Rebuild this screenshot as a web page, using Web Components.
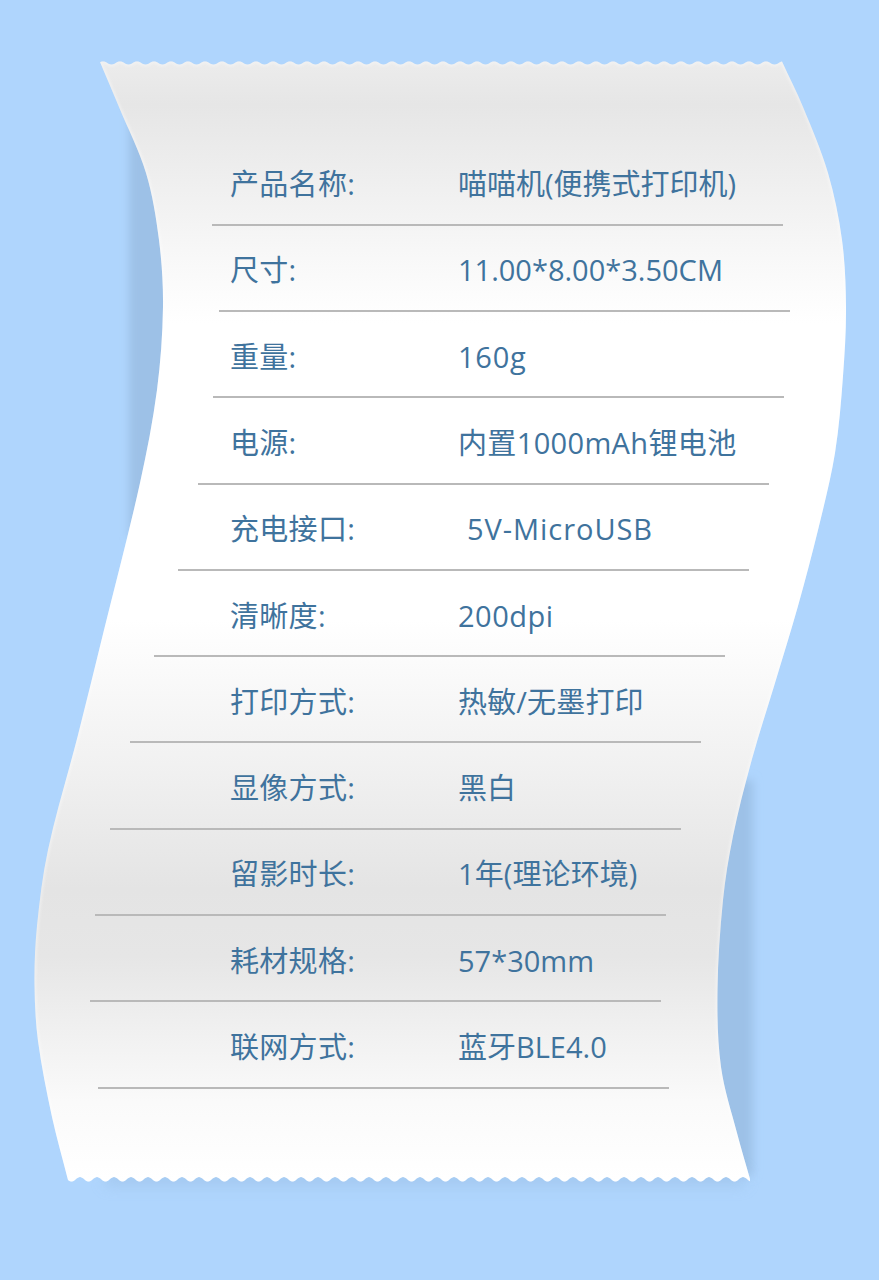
<!DOCTYPE html>
<html><head><meta charset="utf-8"><style>html,body{margin:0;padding:0;background:#afd5fd}</style></head><body>
<spec-receipt>
<spec-row x="212" label="产品名称:" value="喵喵机(便携式打印机)"></spec-row>
<spec-row x="219" label="尺寸:" value="11.00*8.00*3.50CM"></spec-row>
<spec-row x="213" label="重量:" value="160g" ls=".75"></spec-row>
<spec-row x="198" label="电源:" value="内置1000mAh锂电池" ls=".35"></spec-row>
<spec-row x="178" label="充电接口:" value="5V-MicroUSB" nudge="9" ls=".95"></spec-row>
<spec-row x="154" label="清晰度:" value="200dpi" ls=".5"></spec-row>
<spec-row x="130" label="打印方式:" value="热敏/无墨打印" ls=".15"></spec-row>
<spec-row x="110" label="显像方式:" value="黑白"></spec-row>
<spec-row x="95" label="留影时长:" value="1年(理论环境)" ls=".1"></spec-row>
<spec-row x="90" label="耗材规格:" value="57*30mm"></spec-row>
<spec-row x="98" label="联网方式:" value="蓝牙BLE4.0"></spec-row>
</spec-receipt>
<script>
class SpecRow extends HTMLElement{
  constructor(){super();const s=this.attachShadow({mode:'open'});
  s.innerHTML=`<style>
  :host{display:block;height:86.3px;box-sizing:border-box}
  .t{display:flex;height:84.3px;align-items:center;padding-top:4px;box-sizing:border-box;padding-left:230px;font:400 29px/1 "Open Sans","Noto Sans CJK SC",sans-serif;color:#3f739d}
  .l{width:228px;flex:none;letter-spacing:.3px}
  .r{height:2px;width:571px;background:#b9b9b9}
  </style><div class="t"><span class="l"></span><span class="v"></span></div><div class="r"></div>`;}
  connectedCallback(){const s=this.shadowRoot;
    s.querySelector('.l').textContent=this.getAttribute('label');
    const v=s.querySelector('.v');v.textContent=this.getAttribute('value');
    v.style.marginLeft=(this.getAttribute('nudge')||0)+'px';
    v.style.letterSpacing=(this.getAttribute('ls')||0)+'px';
    s.querySelector('.r').style.marginLeft=this.getAttribute('x')+'px';}
}
customElements.define('spec-row',SpecRow);

// smooth curve through unevenly spaced points: tangent from neighbours, handle length from the chord
function spline(p){let d='';const f=n=>n.toFixed(1);
  const tan=i=>{const a=p[i-1]||p[i],c=p[i+1]||p[i],x=c[0]-a[0],y=c[1]-a[1],l=Math.hypot(x,y);return[x/l,y/l];};
  for(let i=0;i<p.length-1;i++){
    const b=p[i],c=p[i+1],l=Math.hypot(c[0]-b[0],c[1]-b[1])/3,t0=tan(i),t1=tan(i+1);
    d+=` C${f(b[0]+t0[0]*l)} ${f(b[1]+t0[1]*l)} ${f(c[0]-t1[0]*l)} ${f(c[1]-t1[1]*l)} ${f(c[0])} ${f(c[1])}`;}
  return d;}
function wave(x0,x1,fn){let d='';const st=x1>x0?1:-1;
  for(let x=x0;st>0?x<=x1:x>=x1;x+=st)d+=` L${x} ${fn(x).toFixed(2)}`;return d;}

class SpecReceipt extends HTMLElement{
  constructor(){super();const s=this.attachShadow({mode:'open'});
  const leftPts=[[68,1180],[52,1117],[38,1041],[34.5,984],[37,926],[48,850],[78,735],[104,630],[140,483],[157,390],[163,307],[159,240],[146,173],[119,107],[100,62]];
  const rightPts=[[782,62],[803,107],[828,173],[842,240],[846,307],[843,376],[835,453],[818,530],[798,606],[775,683],[752,759],[733,836],[723,900],[717.5,990],[721,1067],[737,1133],[750,1179]];
  const T=2*Math.PI/17;
  const top=wave(100,782,x=>63-1.6*Math.cos(T*(x-103)));
  const bot=wave(750,68,x=>1179.3-2.2*Math.cos(T*(x-80)));
  const d='M100 62'+top+spline(rightPts)+bot+spline(leftPts)+'Z';
  s.innerHTML=`<style>
  :host{display:block;position:relative;width:879px;height:1280px;overflow:hidden;background:#afd5fd}
  svg{position:absolute;inset:0}
  .rows{position:relative;padding-top:139.4px}
  </style>
  <svg width="879" height="1280" viewBox="0 0 879 1280" aria-hidden="true">
  <defs>
   <linearGradient id="g" gradientUnits="userSpaceOnUse" x1="0" y1="60" x2="0" y2="1180">
    <stop offset="0" stop-color="#ececec"/><stop offset=".04" stop-color="#e6e6e6"/>
    <stop offset=".2" stop-color="#fbfbfb"/><stop offset=".235" stop-color="#fff"/>
    <stop offset=".5" stop-color="#fff"/><stop offset=".62" stop-color="#f2f2f2"/>
    <stop offset=".74" stop-color="#e4e4e4"/><stop offset=".8" stop-color="#e6e6e6"/>
    <stop offset=".93" stop-color="#fafafa"/><stop offset="1" stop-color="#fff"/>
   </linearGradient>
   <filter id="b" x="-30%" y="-30%" width="160%" height="160%"><feGaussianBlur stdDeviation="4"/></filter>
   <filter id="b2" x="-30%" y="-30%" width="160%" height="160%"><feGaussianBlur stdDeviation="5"/></filter>
   <filter id="b3" x="-10%" y="-200%" width="120%" height="500%"><feGaussianBlur stdDeviation="7"/></filter>
   <filter id="b4" x="-5%" y="-5%" width="110%" height="110%"><feGaussianBlur stdDeviation="1"/></filter>
   <clipPath id="c"><path d="${d}"/></clipPath>
  </defs>
  <rect x="129" y="112" width="60" height="425" fill="#9dc1e7" filter="url(#b)"/>
  <rect x="690" y="780" width="63" height="395" fill="#9dc1e7" filter="url(#b2)"/>
  <rect x="105" y="1170" width="640" height="16" fill="#9dc1e7" opacity=".6" filter="url(#b3)"/>
  <path d="${d}" fill="url(#g)"/>
  <g clip-path="url(#c)"><path d="${d}" fill="none" stroke="#fff" stroke-opacity=".3" stroke-width="4" filter="url(#b4)"/></g>
  </svg>
  <div class="rows"><slot></slot></div>`;}
}
customElements.define('spec-receipt',SpecReceipt);
</script>
</body></html>
